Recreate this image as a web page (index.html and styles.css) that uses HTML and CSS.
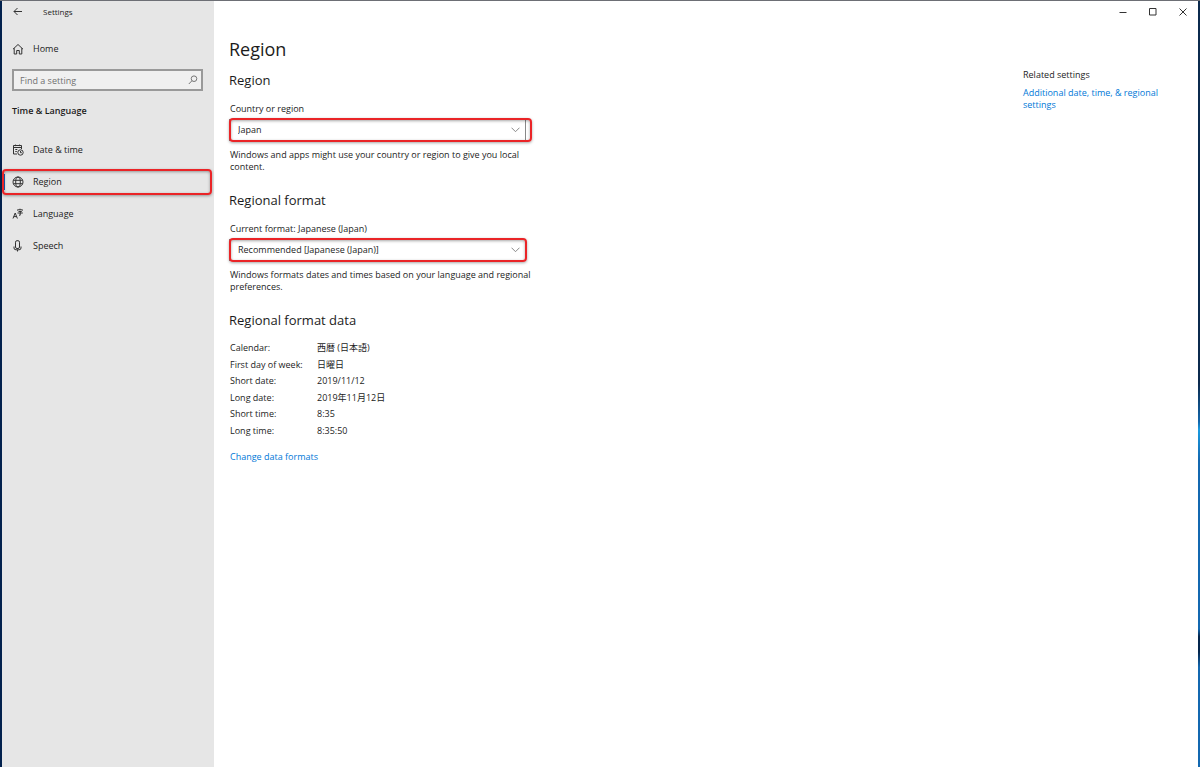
FILE: index.html
```html
<!DOCTYPE html>
<html lang="en">
<head>
<meta charset="utf-8">
<title>Settings</title>
<link rel="stylesheet" href="styles.css">
</head>
<body>
<div class="window">
  <aside class="sidebar">
    <header class="app-bar">
      <button class="back" aria-label="Back"><svg width="10" height="10" viewBox="0 0 10 10"><path d="M9 4.500H1M4.500 1L1 4.500l3.500 3.500"/></svg></button>
      <span class="app-name">Settings</span>
    </header>
    <a class="nav-item home" href="#home">
      <svg width="12" height="12" viewBox="0 0 12 12"><path d="M1 6.200L6 1.500l5 4.700M2.200 5.200V11H4.700V7.500h2.600V11h2.500V5.200"/></svg>
      Home
    </a>
    <div class="search">
      <input type="search" aria-label="Find a setting" placeholder="Find a setting">
      <svg class="search-icon" width="10" height="10" viewBox="0 0 10 10"><circle cx="6" cy="3.700" r="2.800"/><path d="M4 5.700L.8 9"/></svg>
    </div>
    <h2 class="group-title">Time &amp; Language</h2>
    <nav>
      <a class="nav-item" href="#date">
        <svg width="12" height="12" viewBox="0 0 12 12"><path d="M5 10H1.500V1.500h8V5M1.500 3.500h8M3.300 5.500h2M3.300 7.500h1.500M3.500 .6v1.500M7.500 .6v1.500"/><circle cx="8.500" cy="8.500" r="2.700"/><path d="M8.500 7v1.700h1.300"/></svg>
        Date &amp; time
      </a>
      <a class="nav-item current" href="#region" aria-current="page">
        <svg width="12" height="12" viewBox="0 0 12 12"><circle cx="6" cy="6" r="5"/><ellipse cx="6" cy="6" rx="2.300" ry="5"/><path d="M1.400 4.300h9.200M1.400 7.700h9.200"/></svg>
        Region
        <span class="callout"></span>
      </a>
      <a class="nav-item" href="#language">
        <svg width="12" height="12" viewBox="0 0 12 12"><path d="M1 10.500L3.200 5l2.200 5.500M1.800 8.600h2.800M5.500 2.500V1.800h5v.7M8 .7v1.100M6.500 3.500h3L8.200 4.500v2.700H7M5.500 5h5.300"/></svg>
        Language
      </a>
      <a class="nav-item" href="#speech">
        <svg width="12" height="12" viewBox="0 0 12 12"><rect x="3.500" y=".7" width="4" height="7.800" rx="1.500"/><path d="M2 6.500V8q0 1.800 2 1.800h3q2 0 2-1.800V6.500M5.500 9.800V11.500"/></svg>
        Speech
      </a>
    </nav>
  </aside>
  <div class="pane">
    <div class="window-controls">
      <button aria-label="Minimize"><svg width="8" height="8" viewBox="0 0 8 8"><path d="M.5 4.500h7"/></svg></button>
      <button aria-label="Maximize"><svg width="8" height="8" viewBox="0 0 8 8"><path d="M.5 .5h6.500v6.500H.5z"/></svg></button>
      <button aria-label="Close"><svg width="8" height="8" viewBox="0 0 8 8"><path d="M.5 .5l7 7M7.500 .5l-7 7"/></svg></button>
    </div>
    <div class="columns">
      <main>
        <h1>Region</h1>
        <section>
          <h2>Region</h2>
          <label for="country">Country or region</label>
          <div class="picker">
            <select id="country"><option>Japan</option></select>
            <svg class="chevron" width="9" height="6" viewBox="0 0 9 6"><path d="M.5 .7l4 4 4-4"/></svg>
            <span class="callout wide"></span>
          </div>
          <p>Windows and apps might use your country or region to give you local content.</p>
        </section>
        <section>
          <h2>Regional format</h2>
          <label for="format">Current format: Japanese (Japan)</label>
          <div class="picker">
            <select id="format"><option>Recommended [Japanese (Japan)]</option></select>
            <svg class="chevron" width="9" height="6" viewBox="0 0 9 6"><path d="M.5 .7l4 4 4-4"/></svg>
            <span class="callout"></span>
          </div>
          <p>Windows formats dates and times based on your language and regional preferences.</p>
        </section>
        <section>
          <h2>Regional format data</h2>
          <table>
            <tr><th scope="row">Calendar:</th><td lang="ja">西暦 (日本語)</td></tr>
            <tr><th scope="row">First day of week:</th><td lang="ja">日曜日</td></tr>
            <tr><th scope="row">Short date:</th><td>2019/11/12</td></tr>
            <tr><th scope="row">Long date:</th><td lang="ja">2019年11月12日</td></tr>
            <tr><th scope="row">Short time:</th><td>8:35</td></tr>
            <tr><th scope="row">Long time:</th><td>8:35:50</td></tr>
          </table>
          <a class="link" href="#formats">Change data formats</a>
        </section>
      </main>
      <aside class="related">
        <h3>Related settings</h3>
        <a class="link" href="#additional">Additional date, time, &amp; regional settings</a>
      </aside>
    </div>
  </div>
</div>
</body>
</html>
```
FILE: styles.css
```css
* { box-sizing: border-box; }
body {
  margin: 0;
  min-height: 100vh;
  padding: 1px 2px 0;
  display: flex;
  background:
    linear-gradient(#6d6f75, #6d6f75) top / 100% 1px no-repeat,
    linear-gradient(#0b2a4d 0 50%, #1267ac 55%, #1a9be0 56%, #1368b0 60% 82%, #04264d 83% 85%, #1368b0 87%) right / 2px 100% no-repeat,
    #02214d;
  color: #1c1c1c;
  font-family: "Open Sans", "Noto Sans CJK JP", sans-serif;
  font-size: 9px;
  line-height: 12px;
}
h1, h2, h3, p { margin: 0; font-weight: 400; }
button { border: 0; padding: 0; background: none; font: inherit; }
svg { flex: none; fill: none; stroke: #333; stroke-width: 1; }
a { color: inherit; text-decoration: none; }
.window { flex: 1; display: flex; background: #fff; }

.sidebar { width: 212px; flex: none; background: #e6e6e6; }
.app-bar { height: 22px; display: flex; align-items: center; }
.back { width: 32px; height: 22px; display: grid; place-items: center; }
.app-name { margin-left: 9px; font-size: 8px; }
.nav-item { position: relative; height: 32px; padding-left: 10px; display: flex; align-items: center; gap: 9px; }
.home { margin-top: 10px; }
.search { position: relative; margin: 4px 11px 0 10px; }
.search input {
  display: block; width: 100%; height: 22px; padding: 0 24px 0 6px;
  border: 2px solid #999; border-radius: 0; background: #f0f0f0;
  font: inherit; color: #333; appearance: none;
}
.search input::placeholder { color: #707070; opacity: 1; }
.search-icon { position: absolute; right: 5px; top: 6px; stroke: #777; }
.group-title { margin: 14px 10px 17px; font-size: 9px; line-height: 12px; font-weight: 600; }
.current::before { content: ""; position: absolute; left: 0; top: 8px; width: 3px; height: 16px; background: #1a5fb4; }
.callout {
  position: absolute; inset: -1px -1px -1px 0; pointer-events: none;
  border: 2px solid #ea2427; border-radius: 4px;
  box-shadow: 0 1px 3px rgba(0, 0, 0, .35), inset 0 1px 3px rgba(0, 0, 0, .35);
}
.current .callout { inset: 3px 2px 3px 0; }

.pane { flex: 1; min-width: 0; }
.window-controls { height: 22px; display: flex; justify-content: flex-end; }
.window-controls button { width: 30px; display: grid; place-items: center; }
.columns { display: flex; justify-content: space-between; padding-left: 15px; }
main { width: 306px; padding-top: 14px; }
h1 { font-size: 18px; line-height: 24px; }
main h2 { font-size: 13px; line-height: 18px; }
section { margin-bottom: 18px; }
h1 + section { padding-top: 10px; }
label { display: block; margin: 14px 1px 4px; }
.picker { position: relative; width: 297px; }
.picker select {
  display: block; width: 100%; height: 22px; padding: 0 20px 0 8px;
  border: 1px solid #888; border-radius: 0; background: #fff;
  color: inherit; font: inherit; appearance: none;
}
.chevron { position: absolute; right: 6px; top: 8px; stroke: #888; }
.picker .wide { right: -6px; }
section p { margin: 8px 1px 0; }
table { height: 99px; margin: 11px 0 12px; border-collapse: collapse; }
th, td { padding: 0; font-weight: 400; text-align: left; }
th { width: 88px; padding-left: 1px; }
main .link { margin-left: 1px; }
.link { color: #0078d7; }
.related { width: 175px; padding: 46px 30px 0 0; }
.related h3 { margin-bottom: 6px; font-size: 9px; }
.related .link { display: block; }
```
